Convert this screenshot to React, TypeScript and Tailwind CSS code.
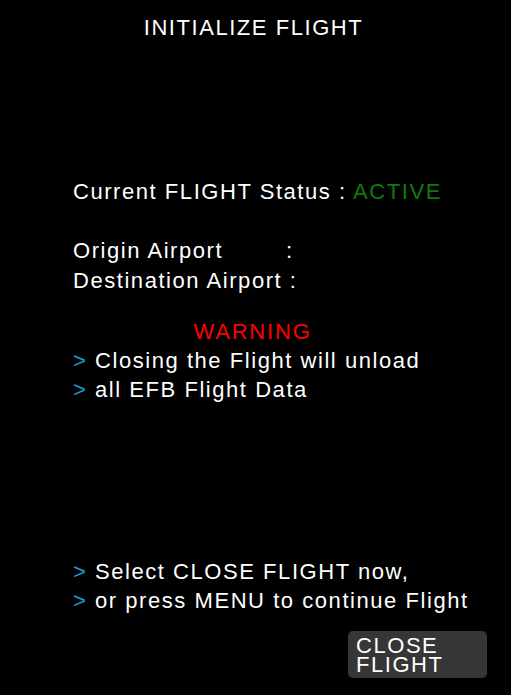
import React from "react";

function Chev({ children }: { children: React.ReactNode }) {
  return (
    <div className="flex">
      <span className="inline-block w-[22px] text-[#1b9ad6]">&gt;</span>
      <span>{children}</span>
    </div>
  );
}

export default function App() {
  return (
    <div className="w-[511px] h-[695px] bg-black text-white font-['Liberation_Sans',Arial,sans-serif] text-[22px] leading-[29px] tracking-[1.55px] flex flex-col overflow-hidden">
      <div className="pt-[13px] text-center pr-[4px]">INITIALIZE FLIGHT</div>
      <div className="pl-[73px] flex flex-col">
        <div className="mt-[135px]">
          Current FLIGHT Status : <span className="text-[#0c7c0c]">ACTIVE</span>
        </div>
        <div className="mt-[30px]">
          <span className="inline-block w-[213px]">Origin Airport</span>:
        </div>
        <div className="mt-[1px]">Destination Airport :</div>
      </div>
      <div className="mt-[22px] text-center pr-[6px] text-[#ff0000] tracking-[1.8px]">WARNING</div>
      <div className="pl-[73px] flex flex-col">
        <Chev>Closing the Flight will unload</Chev>
        <Chev>all EFB Flight Data</Chev>
        <div className="mt-[153px]">
          <Chev>Select CLOSE FLIGHT now,</Chev>
        </div>
        <Chev>or press MENU to continue Flight</Chev>
      </div>
      <div className="mt-[16px] self-end mr-[24px] w-[139px] h-[47px] rounded-[5px] bg-[#363636] pl-[8px] pt-[5px] leading-[19px]">
        <div>CLOSE</div>
        <div>FLIGHT</div>
      </div>
    </div>
  );
}
